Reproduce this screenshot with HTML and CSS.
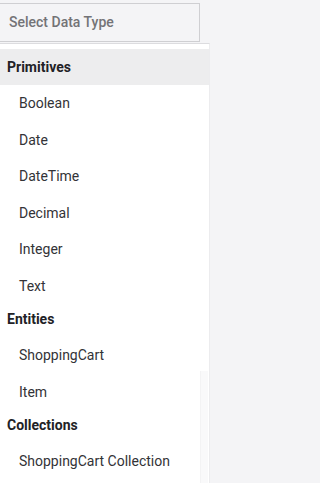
FILE: index.html
```html
<!DOCTYPE html>
<html>
<head>
<meta charset="utf-8">
<link rel="stylesheet" href="styles.css">
</head>
<body>
<div class="wrap">
  <div class="select">Select Data Type</div>
  <div class="dropdown">
    <div class="group-head sticky">Primitives</div>
    <div class="item">Boolean</div>
    <div class="item">Date</div>
    <div class="item">DateTime</div>
    <div class="item">Decimal</div>
    <div class="item">Integer</div>
    <div class="item">Text</div>
    <div class="group-head">Entities</div>
    <div class="item">ShoppingCart</div>
    <div class="item">Item</div>
    <div class="group-head">Collections</div>
    <div class="item">ShoppingCart Collection</div>
    <div class="thumb"></div>
  </div>
</div>
</body>
</html>
```
FILE: styles.css
```css
html, body {
  margin: 0;
  padding: 0;
}
body {
  background: #f4f4f6;
  font-family: Roboto, "Liberation Sans", sans-serif;
  font-size: 14px;
  overflow: hidden;
}
.wrap {
  padding-top: 3px;
}
.select {
  box-sizing: border-box;
  margin-left: -1px;
  width: 201px;
  height: 39px;
  border: 1px solid #cfcfd2;
  background: #f4f4f6;
  color: #737377;
  font-weight: 500;
  line-height: 37px;
  padding-left: 9px;
}
.dropdown {
  position: relative;
  box-sizing: border-box;
  margin-top: 1px;
  width: 210px;
  height: 450px;
  background: #ffffff;
  border-top: 1px solid #dcdcdf;
  border-right: 1px solid #ececee;
  padding-top: 5px;
  overflow: hidden;
}
.group-head {
  font-weight: 700;
  color: #222226;
  padding: 7px 0 9px 7px;
  line-height: 17px;
}
.group-head.sticky {
  background: #ededee;
  padding: 0 0 0 7px;
  height: 36px;
  line-height: 36px;
}
.item {
  color: #333337;
  padding-left: 19px;
  height: 36.5px;
  line-height: 36.5px;
}
.thumb {
  position: absolute;
  left: 200px;
  top: 327px;
  width: 7px;
  height: 130px;
  background: #f9f9fa;
  border-left: 1px solid #f3f3f4;
}
```
